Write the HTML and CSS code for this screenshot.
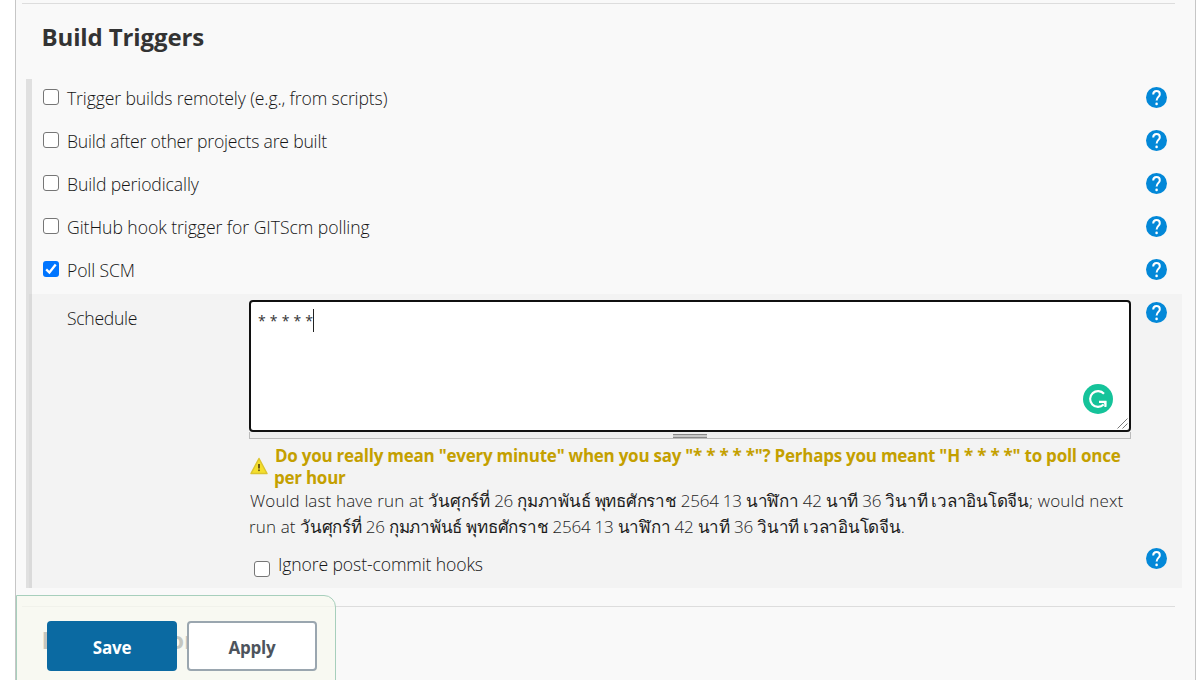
FILE: index.html
```html
<!DOCTYPE html>
<html lang="en">
<head>
<meta charset="utf-8">
<title>Build Triggers</title>
<link rel="stylesheet" href="styles.css">
</head>
<body>
<svg width="0" height="0" class="defs"><defs>
<symbol id="help" viewBox="0 0 21 21"><circle cx="10.5" cy="10.5" r="10.5" fill="#0388d8"/><path d="M7.2 7.6C7.2 5.3 8.6 4.1 10.5 4.1s3.3 1.2 3.3 3.1c0 2.6-3.2 3-3.2 6.4" fill="none" stroke="#fff" stroke-width="2"/><circle cx="10.6" cy="16.9" r="1.3" fill="#fff"/></symbol>
</defs></svg>
<main class="panel">
  <h2 class="title first">Build Triggers</h2>
  <section class="triggers">
    <div class="row"><span class="box"></span><span class="label l1">Trigger builds remotely (e.g., from scripts)</span><svg class="help"><use href="#help"/></svg></div>
    <div class="row"><span class="box"></span><span class="label l2">Build after other projects are built</span><svg class="help"><use href="#help"/></svg></div>
    <div class="row"><span class="box"></span><span class="label l3">Build periodically</span><svg class="help"><use href="#help"/></svg></div>
    <div class="row"><span class="box"></span><span class="label l4">GitHub hook trigger for GITScm polling</span><svg class="help"><use href="#help"/></svg></div>
    <div class="row"><span class="box checked"><svg viewBox="0 0 16 16"><path d="M3.2 8.4l3.2 3.1 6.3-8" fill="none" stroke="#fff" stroke-width="2.3"/></svg></span><span class="label l5">Poll SCM</span><svg class="help"><use href="#help"/></svg></div>
    <div class="schedule">
      <div class="name">Schedule</div>
      <div class="content">
        <div class="area"><span class="value">* * * * *</span><i class="caret"></i>
          <svg class="grammar" viewBox="0 0 30 30"><circle cx="15" cy="15" r="15" fill="#15c39a"/><path d="M21 9.8A7.9 7.9 0 1 0 20.6 20.6M16 17.9h6.4v5.1" fill="none" stroke="#fff" stroke-width="2.1"/><path d="M19 17h4.3v5z" fill="#fff"/></svg>
          <svg class="grip" viewBox="0 0 11 11"><path d="M.5 10.5l10-10M5.5 10.5l5-5" stroke="#555" stroke-width=".8" fill="none"/></svg>
        </div>
        <div class="resizer"><i></i></div>
        <div class="warning">
          <svg viewBox="0 0 18 18"><path d="M9 1.5L17 16.5H1z" fill="#f5df2c" stroke="#dcc52e" stroke-width="1.5" stroke-linejoin="round"/><path d="M9 7v4.5" stroke="#6b5a14" stroke-width="2"/><circle cx="9" cy="13.3" r="1" fill="#6b5a14"/></svg>
          <div><span class="w1">Do you really mean "every minute" when you say "* * * * *"? Perhaps you meant "H * * * *" to poll once</span><br><span class="w2">per hour</span></div>
        </div>
        <div class="runs">
          <div class="line r1"><span class="wide">Would last have run at </span>วันศุกร์ที่ 26 กุมภาพันธ์ พุทธศักราช 2564 13 นาฬิกา 42 นาที 36 วินาที เวลาอินโดจีน<span class="wide">; would next</span></div>
          <div class="line r2"><span class="wide">run at </span>วันศุกร์ที่ 26 กุมภาพันธ์ พุทธศักราช 2564 13 นาฬิกา 42 นาที 36 วินาที เวลาอินโดจีน.</div>
        </div>
        <div class="ignore"><span class="box"></span><span class="label l6">Ignore post-commit hooks</span></div>
      </div>
      <div class="helps"><svg class="help"><use href="#help"/></svg><svg class="help"><use href="#help"/></svg></div>
    </div>
  </section>
  <h2 class="title second">Build Environment</h2>
</main>
<div class="actions"><button class="save">Save</button><button class="apply">Apply</button></div>
</body>
</html>
```
FILE: styles.css
```css
* { box-sizing: border-box; }
body {
  margin: 0;
  height: 680px;
  overflow: hidden;
  background: #fff;
  color: #333;
  font: 17px/24px "Open Sans", "Noto Sans", sans-serif;
}
.defs { position: absolute; }
.panel {
  width: 1181px;
  height: 680px;
  margin-left: 15px;
  padding: 3px 13px 0 10px;
  border: 1px solid #c6c6c6;
  border-width: 0 1px;
  background: #f9f9f9;
  overflow: hidden;
}
.title {
  margin: 0 7px 0 -4px;
  padding: 16px 0 0 20px;
  border-top: 1px solid #ddd;
  font-size: 24px;
  line-height: 34px;
  font-weight: 700;
  letter-spacing: -0.12px;
  text-indent: -0.5px;
  white-space: nowrap;
}
.title.first { height: 76px; }
.title.second { margin-top: 18px; }
.triggers {
  height: 509px;
  border-left: 6px solid #e0e0e0;
}
.row {
  display: flex;
  height: 43px;
  padding: 8px 15px 0 11px;
}
.box {
  width: 16px;
  height: 16px;
  margin-top: 2px;
  flex: none;
  border: 1px solid #767676;
  border-radius: 3px;
  background: #fff;
}
.box.checked { border: 0; background: #0075ff; }
.box svg { display: block; width: 16px; height: 16px; }
.label { margin-left: 8px; white-space: nowrap; }
.label, .name {
  font-size: 17.6px;
  line-height: 22px;
  font-weight: 300;
  color: #151515;
}
.l1, .l3, .l5, .l6 { letter-spacing: -0.12px; }
.l2 { letter-spacing: -0.2px; }
.l4 { letter-spacing: -0.05px; }
.help { width: 21px; height: 21px; flex: none; }
.row .help { margin-left: auto; }
.schedule {
  display: flex;
  height: 294px;
  margin-left: -3px;
  padding: 6px 15px 0 38px;
  background: linear-gradient(90deg, #dadada 3px, #f3f3f3 3px);
}
.name { width: 182px; padding-top: 7px; letter-spacing: -0.3px; }
.content { width: 882px; flex: none; }
.area {
  position: relative;
  height: 132px;
  padding: 7px;
  border: 2px solid #101010;
  border-radius: 4px;
  background: #fff;
  display: flex;
}
.value { font-size: 14px; line-height: 24px; letter-spacing: 0.24px; white-space: pre; }
.caret { width: 1px; height: 23px; background: #222; }
.grammar { position: absolute; width: 30px; height: 30px; right: 16px; bottom: 16px; }
.grip { position: absolute; width: 11px; height: 11px; right: 1px; bottom: 1px; }
.resizer {
  height: 7px;
  border: 1px solid #bbb;
  border-top: 0;
  background: #eee;
}
.resizer i {
  display: block;
  width: 34px;
  height: 4px;
  margin: 0 auto;
  position: relative;
  top: 2px;
  border: 1px solid #888;
  border-width: 1px 0;
  background: #c8c8c8;
}
.warning {
  display: flex;
  height: 49px;
  padding-top: 6px;
  color: #c4a000;
  font-weight: 700;
  line-height: 22px;
  letter-spacing: -0.25px;
  white-space: nowrap;
}
.warning svg { width: 18px; height: 18px; margin: 12px 6px 0 1px; flex: none; }
.w1 { margin-left: 1px; }
.line {
  height: 26px;
  line-height: 26px;
  letter-spacing: -0.25px;
  font-weight: 300;
  color: #1c1c1c;
  white-space: nowrap;
}
.wide { letter-spacing: 0.14px; }
.r1 { text-indent: 1px; }
.ignore { display: flex; padding: 13px 0 0 5px; }
.ignore .box { margin-top: 8px; }
.helps {
  display: flex;
  flex-direction: column;
  gap: 225px;
  padding-top: 2px;
  margin-left: auto;
}
.actions {
  position: absolute;
  left: 16px;
  top: 595px;
  width: 320px;
  height: 90px;
  display: flex;
  gap: 10px;
  padding: 25px 0 0 30px;
  border: 1px solid #a7cfbc;
  border-radius: 0 12px 0 0;
  background: rgba(247, 248, 239, 0.75);
}
.actions button {
  width: 130px;
  height: 50px;
  padding: 3px 0 0;
  border: 0;
  border-radius: 4px;
  font: 700 17px "Open Sans", sans-serif;
  letter-spacing: -0.2px;
}
.actions .save { background: #0b6aa2; color: #fff; }
.actions .apply { background: #fff; border: 2px solid #9aa6af; color: #4d545d; }
```
